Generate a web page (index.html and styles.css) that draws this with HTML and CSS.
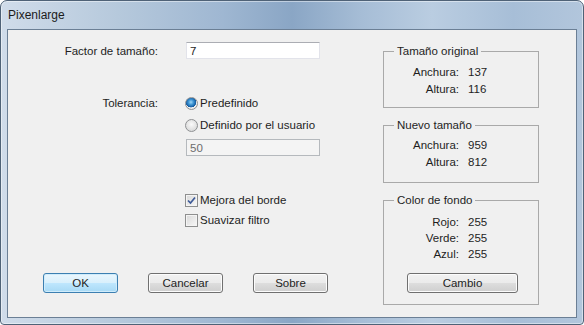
FILE: index.html
```html
<!DOCTYPE html>
<html lang="es">
<head>
    <meta charset="UTF-8">
    <title>Pixenlarge</title>
    <link rel="stylesheet" href="styles.css">
</head>
<body>
    <div class="window">
        <div class="titlebar">Pixenlarge</div>
        <div class="client">
            <div class="left">
                <div class="row row-factor">
                    <div class="label">Factor de tamaño:</div>
                    <div class="control"><div class="textbox">7</div></div>
                </div>

                <div class="row row-radio first-radio">
                    <div class="label">Tolerancia:</div>
                    <div class="control"><span class="radio checked"></span>Predefinido</div>
                </div>
                <div class="row row-radio">
                    <div class="label"></div>
                    <div class="control"><span class="radio"></span>Definido por el usuario</div>
                </div>
                <div class="row row-disabled">
                    <div class="label"></div>
                    <div class="control"><div class="textbox disabled">50</div></div>
                </div>

                <div class="row row-check first-check">
                    <div class="label"></div>
                    <div class="control">
                        <span class="checkbox">
                            <svg width="9" height="9" viewBox="0 0 9 9"><path d="M1 4.5 L3.5 7 L8 1.5" fill="none" stroke="#3d5a98" stroke-width="1.7"/></svg>
                        </span>Mejora del borde
                    </div>
                </div>
                <div class="row row-check">
                    <div class="label"></div>
                    <div class="control"><span class="checkbox"></span>Suavizar filtro</div>
                </div>

                <div class="buttons">
                    <button class="btn default">OK</button>
                    <button class="btn">Cancelar</button>
                    <button class="btn">Sobre</button>
                </div>
            </div>

            <div class="right">
                <fieldset class="group group-original">
                    <legend>Tamaño original</legend>
                    <div class="pair"><span class="key">Anchura:</span><span class="val">137</span></div>
                    <div class="pair"><span class="key">Altura:</span><span class="val">116</span></div>
                </fieldset>
                <fieldset class="group group-new">
                    <legend>Nuevo tamaño</legend>
                    <div class="pair"><span class="key">Anchura:</span><span class="val">959</span></div>
                    <div class="pair"><span class="key">Altura:</span><span class="val">812</span></div>
                </fieldset>
                <fieldset class="group group-color">
                    <legend>Color de fondo</legend>
                    <div class="pair short"><span class="key">Rojo:</span><span class="val">255</span></div>
                    <div class="pair short"><span class="key">Verde:</span><span class="val">255</span></div>
                    <div class="pair short"><span class="key">Azul:</span><span class="val">255</span></div>
                    <button class="btn wide">Cambio</button>
                </fieldset>
            </div>
        </div>
    </div>
</body>
</html>
```

FILE: styles.css
```css
* {
    margin: 0;
    padding: 0;
    box-sizing: border-box;
}

body {
    width: 584px;
    height: 325px;
    overflow: hidden;
    background: #fff;
    font-family: 'Liberation Sans', Arial, sans-serif;
    font-size: 11.5px;
    color: #1e1e1e;
}

.window {
    width: 584px;
    height: 325px;
    display: flex;
    flex-direction: column;
    border: 1px solid #4f6277;
    border-radius: 7px 7px 4px 4px;
    padding: 0 6px 6px 6px;
    background: linear-gradient(90deg, #d0dcea 0%, #b6c9dc 20%, #9fb7d2 38%, #8aa6c5 50%, #a6bdd6 62%, #bacde1 74%, #a7bed7 88%, #b2c6dc 100%);
    box-shadow: inset 0 0 0 1px rgba(255, 255, 255, 0.45);
}

.titlebar {
    height: 28px;
    padding: 7px 0 0 1px;
    font-size: 12px;
    color: #1b1b1b;
}

.client {
    flex: 1;
    display: flex;
    border: 1px solid #6b7f95;
    background: #f0f0f0;
}

/* left column */
.left {
    width: 375px;
    padding-top: 12px;
}

.row {
    display: flex;
    align-items: center;
}

.label {
    width: 150px;
    text-align: right;
}

.control {
    margin-left: 27px;
    display: flex;
    align-items: center;
}

.row-factor {
    height: 17px;
}

.textbox {
    width: 134px;
    height: 17px;
    margin-left: 1px;
    padding: 1px 3px;
    line-height: 14px;
    background: #fff;
    border: 1px solid #e2e3ea;
    border-top-color: #abadb3;
}

.textbox.disabled {
    background: #f4f4f4;
    border-color: #b5b9bd;
    color: #6d6d6d;
}

.row-radio {
    height: 22px;
}

.first-radio {
    margin-top: 33px;
}

.radio {
    width: 13px;
    height: 13px;
    margin-right: 2px;
    border-radius: 50%;
    border: 1px solid #8f9193;
    background: radial-gradient(circle at 50% 40%, #fafafa 0%, #e3e3e3 55%, #cfd1d3 100%);
}

.radio.checked {
    background: radial-gradient(circle at 45% 38%, #9fd5f6 0%, #3d95d4 28%, #13599e 55%, #f1f1f1 60%, #d4d6d8 100%);
}

.row-disabled {
    height: 17px;
    margin-top: 3px;
}

.row-check {
    height: 20px;
}

.first-check {
    margin-top: 34px;
}

.checkbox {
    width: 13px;
    height: 13px;
    margin-right: 2px;
    border: 1px solid #8e8f8f;
    background: linear-gradient(135deg, #d8d8d8, #f8f8f8);
    box-shadow: inset 0 0 0 1px #f4f4f4;
    display: flex;
    align-items: center;
    justify-content: center;
}

.buttons {
    display: flex;
    gap: 30px;
    margin-top: 43px;
    padding-left: 35px;
}

.btn {
    width: 75px;
    height: 20px;
    font-family: 'Liberation Sans', Arial, sans-serif;
    font-size: 11.5px;
    color: #1e1e1e;
    border: 1px solid #707070;
    border-radius: 3px;
    background: linear-gradient(#f2f2f2 0%, #ebebeb 48%, #dddddd 52%, #cfcfcf 100%);
    box-shadow: inset 0 0 0 1px #fcfcfc;
}

.btn.default {
    border-color: #3c7fb1;
    background: linear-gradient(#eaf6fd 0%, #d9f0fc 48%, #bee6fd 52%, #a7d9f5 100%);
    box-shadow: inset 0 0 0 1px #d0ecfb;
}

.btn.wide {
    width: 111px;
    margin: 11px 0 0 13px;
}

/* right column with group boxes */
.right {
    width: 156px;
    padding-top: 14px;
    display: flex;
    flex-direction: column;
}

.group {
    border: 1px solid #a9a9a9;
    padding: 0 0 0 10px;
    min-width: 0;
}

.group legend {
    padding: 0 3px;
    line-height: 14px;
}

.group-original {
    height: 64px;
    padding-top: 6px;
}

.group-new {
    height: 65px;
    margin-top: 10px;
    padding-top: 5px;
}

.group-color {
    height: 112px;
    margin-top: 10px;
    padding-top: 7px;
}

.pair {
    display: flex;
    line-height: 17px;
}

.pair.short {
    line-height: 16px;
}

.key {
    width: 65px;
    text-align: right;
}

.val {
    margin-left: 9px;
}
```
